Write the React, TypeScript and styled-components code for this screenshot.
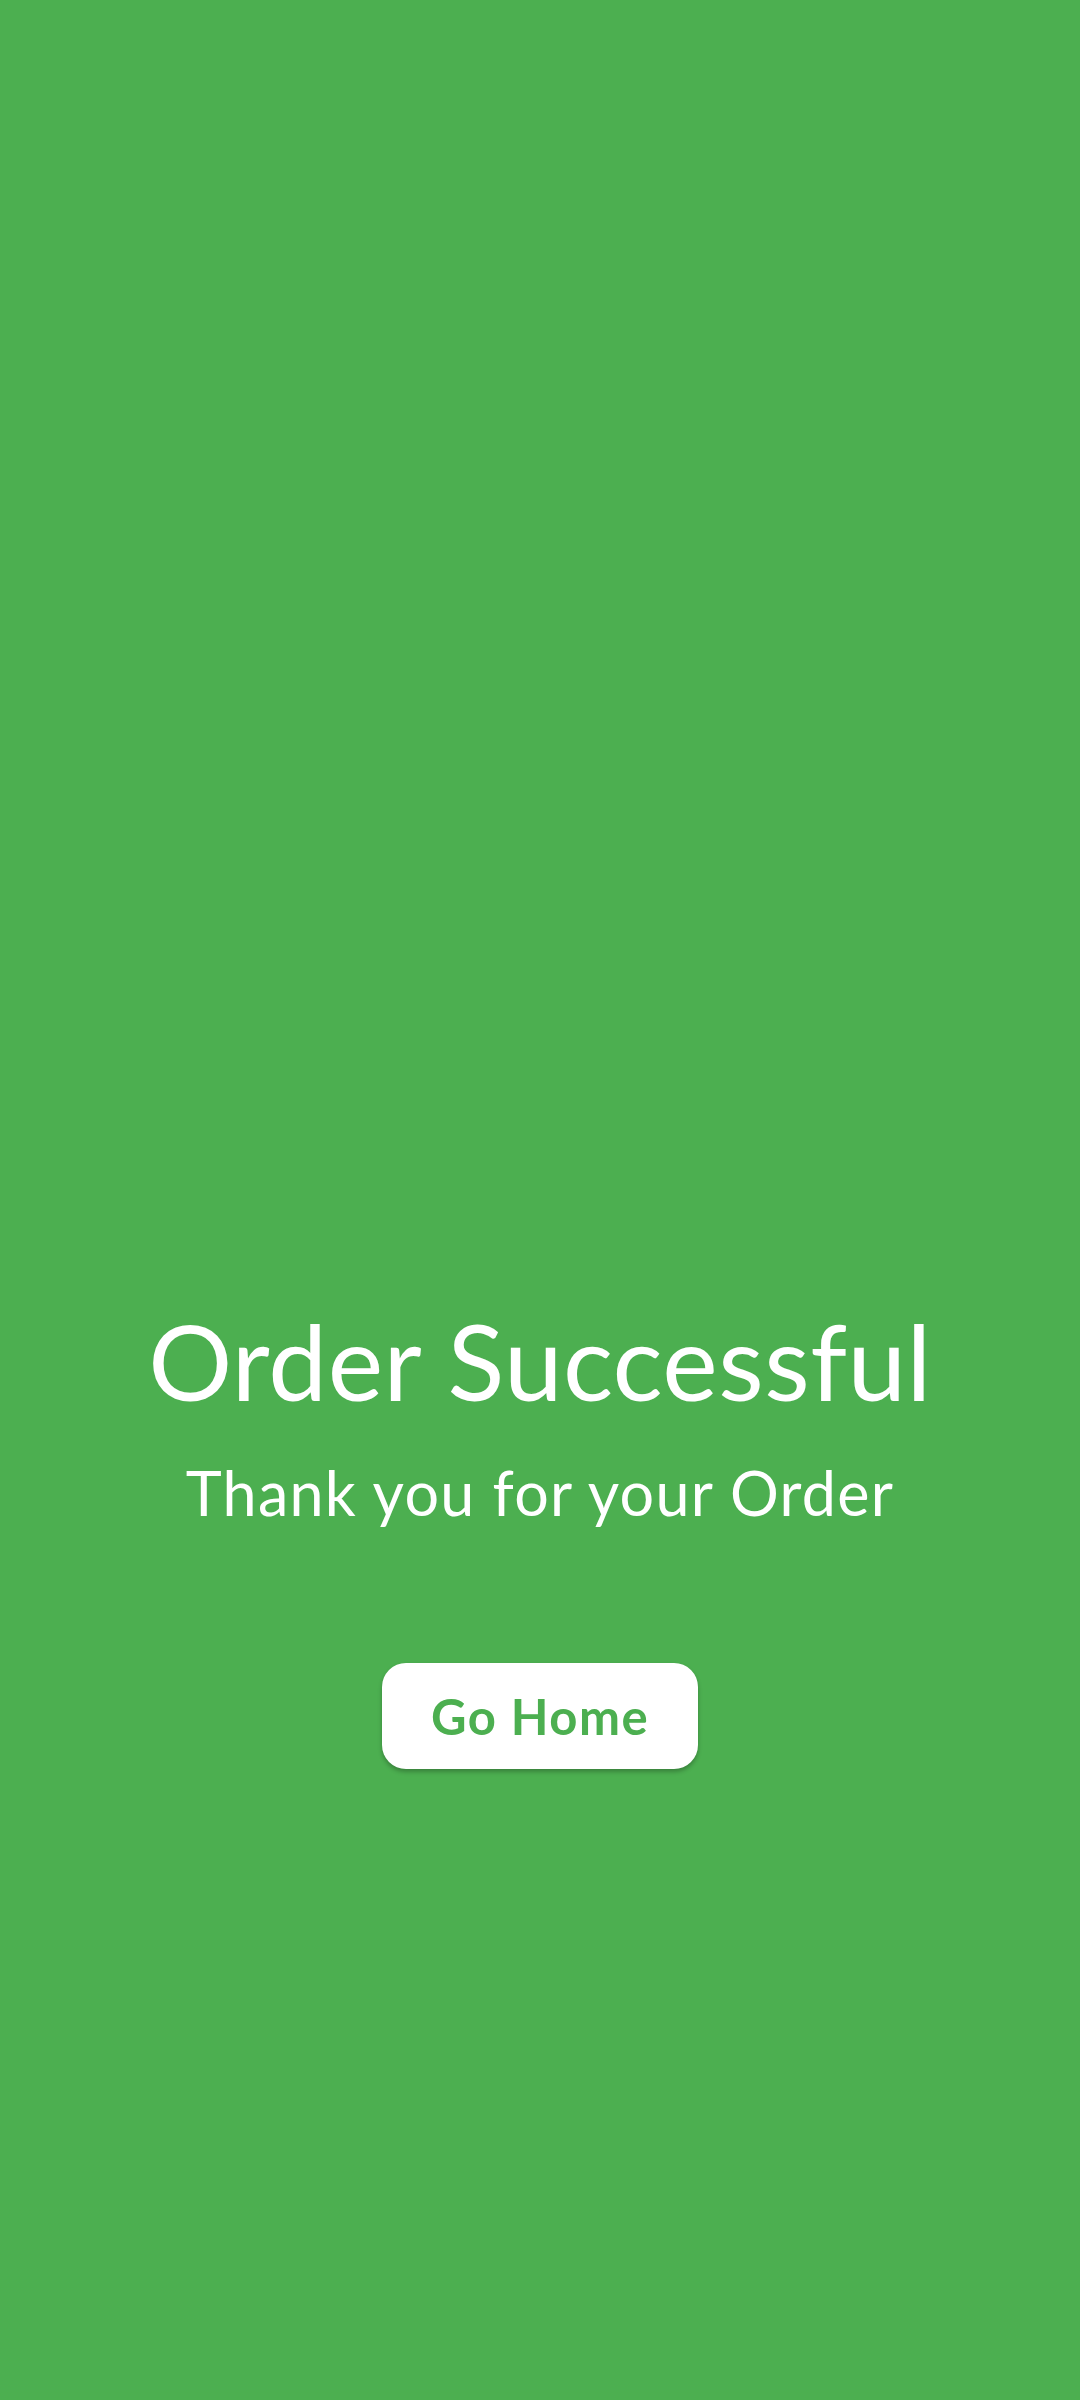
import React from "react";
import styled, { createGlobalStyle } from "styled-components";

const GlobalStyle = createGlobalStyle`
  html, body {
    margin: 0;
    padding: 0;
    background: #4caf50;
  }
`;

const Screen = styled.div`
  box-sizing: border-box;
  width: 1080px;
  height: 2400px;
  background: #4caf50;
  display: flex;
  flex-direction: column;
  align-items: center;
  padding-top: 1297px;
  font-family: "Lato", "Noto Sans", sans-serif;
  color: #ffffff;
`;

const Title = styled.h1`
  margin: 0;
  font-size: 105px;
  line-height: 1.2;
  font-weight: 400;
  letter-spacing: 0.5px;
`;

const Subtitle = styled.p`
  margin: 33px 0 0;
  font-size: 61px;
  line-height: 1.2;
  font-weight: 400;
  letter-spacing: 1.3px;
`;

const HomeButton = styled.button`
  margin-top: 134px;
  width: 316px;
  height: 106px;
  border: none;
  border-radius: 24px;
  background: #ffffff;
  color: #4caf50;
  font-family: inherit;
  font-size: 49px;
  font-weight: 700;
  letter-spacing: 1.5px;
  box-shadow: 0 3px 4px rgba(0, 0, 0, 0.25);
  cursor: pointer;
`;

export default function App() {
  return (
    <>
      <GlobalStyle />
      <Screen>
        <Title>Order Successful</Title>
        <Subtitle>Thank you for your Order</Subtitle>
        <HomeButton>Go Home</HomeButton>
      </Screen>
    </>
  );
}
